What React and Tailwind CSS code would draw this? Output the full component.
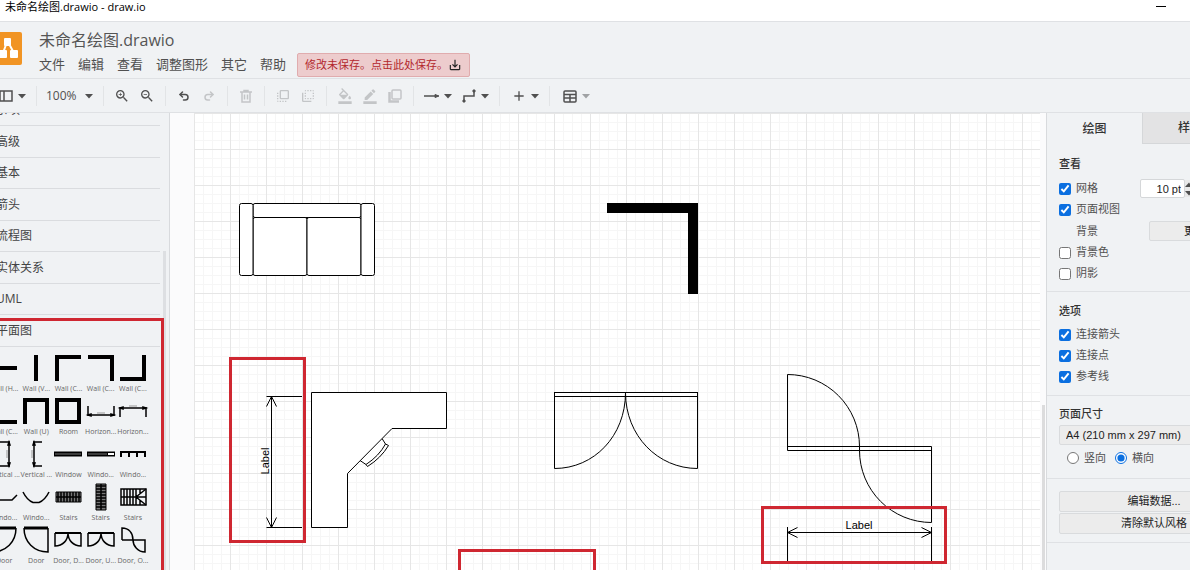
import React, { useState } from 'react'
import {
  MdZoomIn, MdZoomOut, MdFlipToFront, MdFlipToBack, MdFormatColorFill, MdBorderColor, MdSaveAlt, MdAdd,
} from 'react-icons/md'
import { Undo2, Redo2 } from 'lucide-react'

const menus = ['文件', '编辑', '查看', '调整图形', '其它', '帮助']
const categories = ['杂项', '高级', '基本', '箭头', '流程图', '实体关系', 'UML', '平面图']

// each drawing lives in a 28x28 box
const shapes = [
  { name: 'Wall (H...', art: <path d="M1 14H27" strokeWidth="4" /> },
  { name: 'Wall (V...', art: <path d="M14 1V27" strokeWidth="4" /> },
  { name: 'Wall (C...', art: <path d="M3 27V3H27" strokeWidth="4" /> },
  { name: 'Wall (C...', art: <path d="M1 3H25V27" strokeWidth="4" /> },
  { name: 'Wall (C...', art: <path d="M1 25H25V1" strokeWidth="4" /> },
  { name: 'Wall (C...', art: <path d="M3 1V25H27" strokeWidth="4" /> },
  { name: 'Wall (U)', art: <path d="M3 27V3H25V27" strokeWidth="4" /> },
  { name: 'Room', art: <path d="M3 3H25V25H3Z" strokeWidth="4" /> },
  { name: 'Horizon...', art: <><path d="M1 9V19M27 9V19M1 18H27" /><path d="M1 18l3-1v2zM27 18l-3-1v2z" fill="black" /><path d="M10 16H18" stroke="#999" strokeWidth="1" /></> },
  { name: 'Horizon...', art: <><path d="M1 10V20M27 10V20M1 11H27" /><path d="M1 11l3-1v2zM27 11l-3-1v2z" fill="black" /><path d="M10 9H18" stroke="#999" strokeWidth="1" /></> },
  { name: 'Vertical ...', art: <><path d="M10 2H20M10 26H20M19 2V26" /><path d="M19 2l-1 3h2zM19 26l-1-3h2z" fill="black" /><path d="M17 10V18" stroke="#999" strokeWidth="1" /></> },
  { name: 'Vertical ...', art: <><path d="M11 2H20M11 26H20M12 2V26" /><path d="M12 2l-1 3h2zM12 26l-1-3h2z" fill="black" /><path d="M10 10V18" stroke="#999" strokeWidth="1" /></> },
  { name: 'Window', art: <><path d="M0 14H28" strokeWidth="5" /><path d="M1 14H27" stroke="#777" strokeWidth="1" /></> },
  { name: 'Windo...', art: <><path d="M0 14H28" strokeWidth="5" /><path d="M1 14H20" stroke="#777" strokeWidth="1" /><path d="M21 14H27" stroke="white" strokeWidth="2" /></> },
  { name: 'Windo...', art: <><path d="M1 12H27" strokeWidth="2" /><path d="M2 12V17M10 12V17M18 12V17M26 12V17" strokeWidth="2" /></> },
  { name: 'Windo...', art: <path d="M-8 14L-2 17H22L27 12" /> },
  { name: 'Windo...', art: <path d="M1 9C4 15 7 18 11 19.500H17C21 18 24 15 27 9" /> },
  { name: 'Stairs', art: <><path d="M2 9H27V19H2Z" strokeWidth="1" fill="#777" /><path d="M4 9V19M7 9V19M10 9V19M13 9V19M16 9V19M19 9V19M22 9V19M25 9V19M2 14H27" strokeWidth="1.500" /></> },
  { name: 'Stairs', art: <><path d="M9 1H19V27H9Z" strokeWidth="1" fill="#777" /><path d="M9 3H19M9 6H19M9 9H19M9 12H19M9 15H19M9 18H19M9 21H19M9 24H19M14 1V27" strokeWidth="1.500" /></> },
  { name: 'Stairs', art: <><path d="M2 6H27V22H2Z" /><path d="M5 6V22M8 6V22M11 6V22M14 6V22M17 6V22M2 14H27M17 14L27 6M17 14L27 22M21 6V11M21 17V22" /></> },
  { name: 'Door', art: <><path d="M2 2H26" strokeWidth="3" /><path d="M26 2C26 16 16 26 2 26V2" /></> },
  { name: 'Door', art: <><path d="M2 2H26" strokeWidth="3" /><path d="M2 2C2 16 12 26 26 26V2" /></> },
  { name: 'Door, D...', art: <><path d="M1 7H27" strokeWidth="2" /><path d="M1 7V20C9 20 14 14 14 7C14 14 19 20 27 20V7" /></> },
  { name: 'Door, U...', art: <><path d="M1 7H27" strokeWidth="2" /><path d="M1 7V20C9 20 14 14 14 7C14 14 19 20 27 20V7" /></> },
  { name: 'Door, O...', art: <path d="M3 14V2C10 2 14 7 14 14C14 20 19 26 26 26V14H3" /> },
]

function Caret({ className = '' }) {
  return <svg className={`h-2 w-2 shrink-0 ${className}`} viewBox="0 0 8 8" aria-hidden="true"><path d="M0 2H8L4 6.500Z" fill="currentColor" /></svg>
}

function Tool({ label, muted, children }) {
  return (
    <button aria-label={label} className={`flex h-6 w-[25px] shrink-0 items-center justify-center ${muted ? 'text-[#c3c5c7]' : 'text-[#505050]'}`}>
      {children}
    </button>
  )
}

function DropTool({ label, muted, children }) {
  return (
    <button aria-label={label} className="flex h-6 w-[37px] shrink-0 items-center text-[#505050]">
      <span className="flex w-[25px] shrink-0 justify-center">{children}</span>
      <Caret className={muted ? 'text-[#a0a2a4]' : ''} />
    </button>
  )
}

function Separator() {
  return <span className="flex w-3 shrink-0 justify-center"><span className="h-5 w-px bg-[#e2e4e6]" /></span>
}

function Header() {
  return (
    <header className="flex h-[58px] shrink-0 border-t border-b border-[#dfe1e4] bg-[#f0f2f4] whitespace-nowrap">
      <svg className="mt-[10px] -ml-[11px] h-[33px] w-[33px] shrink-0" viewBox="0 0 33 33" aria-label="draw.io">
        <rect width="33" height="33" rx="2" fill="#f19424" />
        <path d="M18 10L14 21M19 10L25 21" stroke="white" strokeWidth="2" />
        <rect x="15" y="6" width="7" height="8" rx="1" fill="white" />
        <rect x="10" y="18" width="8" height="8" rx="1" fill="white" />
        <rect x="21" y="18" width="8" height="8" rx="1" fill="white" />
      </svg>
      <div className="ml-[17px] flex flex-col pt-[5px]">
        <a href="#file" className="h-[26px] text-base leading-[26px] text-[#555]">未命名绘图.drawio</a>
        <nav className="flex h-6 items-center gap-[13px] text-[13px] text-[#505050]">
          {menus.map((m) => <button key={m}>{m}</button>)}
          <button className="-ml-[2px] flex h-6 items-center rounded-xs border border-[#e0acae] bg-[#edcccd] px-[7px] text-[11px] text-[#b3282d]">
            修改未保存。点击此处保存。
            <MdSaveAlt className="h-3.5 w-3.5 text-[#222]" />
          </button>
        </nav>
      </div>
    </header>
  )
}

function Toolbar() {
  return (
    <div className="flex h-[34px] shrink-0 items-center border-b border-[#dfe1e4] bg-[#f0f2f4]">
      <div className="-ml-[7px] flex items-center">
        <DropTool label="视图">
          <svg className="h-3.5 w-3.5" viewBox="0 0 14 14" fill="none" stroke="currentColor" strokeWidth="1.500"><path d="M1 2H13V12H1ZM5 2V12" /></svg>
        </DropTool>
        <Separator />
        <button className="flex h-6 w-[55px] items-center justify-between px-1 text-xs text-[#505050]">100%<Caret /></button>
        <Separator />
        <Tool label="放大"><MdZoomIn className="h-4 w-4" /></Tool>
        <Tool label="缩小"><MdZoomOut className="h-4 w-4" /></Tool>
        <Separator />
        <Tool label="撤销"><Undo2 className="h-3 w-3" strokeWidth={3} /></Tool>
        <Tool label="重做" muted><Redo2 className="h-3 w-3" strokeWidth={3} /></Tool>
        <Separator />
        <Tool label="删除" muted>
          <svg className="h-3.5 w-3.5" viewBox="0 0 14 14" fill="none" stroke="currentColor" strokeWidth="1.500"><path d="M1 3H13M5 3V1.500H9V3M3 3V13H11V3M5.500 5.500V10.500M8.500 5.500V10.500" /></svg>
        </Tool>
        <Separator />
        <Tool label="移至最前" muted><MdFlipToFront className="h-4 w-4" /></Tool>
        <Tool label="移至最后" muted><MdFlipToBack className="h-4 w-4" /></Tool>
        <Separator />
        <Tool label="填充颜色" muted><MdFormatColorFill className="h-4 w-4" /></Tool>
        <Tool label="线条颜色" muted><MdBorderColor className="h-4 w-4" /></Tool>
        <Tool label="阴影" muted>
          <svg className="h-3.5 w-3.5" viewBox="0 0 14 14" fill="none" stroke="currentColor"><rect x="4" y="1" width="9" height="9" rx="1" strokeWidth="1.500" /><path d="M1.500 3V12.500H11" strokeWidth="2.500" /></svg>
        </Tool>
        <Separator />
        <DropTool label="连接">
          <svg className="h-4 w-4" viewBox="0 0 16 16" fill="none" stroke="currentColor" strokeWidth="1.500"><path d="M0 8H12" /><path d="M11 6.500L15 8L11 9.500Z" fill="currentColor" strokeWidth="1" /></svg>
        </DropTool>
        <DropTool label="航点">
          <svg className="h-4 w-4" viewBox="0 0 16 16" fill="none" stroke="currentColor" strokeWidth="1.500"><path d="M3 12V8H13V4" /><path d="M2 12H4V14H2ZM12 2H14V4H12Z" fill="currentColor" strokeWidth="1" /></svg>
        </DropTool>
        <Separator />
        <span className="ml-px flex">
          <DropTool label="插入"><MdAdd className="h-4 w-4" /></DropTool>
        </span>
        <Separator />
        <span className="ml-[2px] flex">
          <DropTool label="表格" muted>
            <svg className="h-3.5 w-3.5" viewBox="0 0 14 14" fill="none" stroke="currentColor" strokeWidth="1.500"><rect x="1" y="2" width="12" height="11" rx="1" /><path d="M1 5.500H13M1 9H13M7 5.500V13" /></svg>
          </DropTool>
        </span>
      </div>
    </div>
  )
}

function Sidebar() {
  return (
    <aside className="relative w-[170px] shrink-0 overflow-hidden border-r border-[#d8dadd] bg-[#f0f2f4] font-['Open_Sans','Noto_Sans_CJK_SC',sans-serif]">
      <div className="-mt-[18px] mr-[9px] -ml-1">
        {categories.map((c) => (
          <button key={c} className="flex w-full items-center border-b border-[#dadcdf] text-xs text-[#444] odd:h-[31px] even:h-8">{c}</button>
        ))}
      </div>
      <div className="mt-[5px] mr-5 -ml-3 grid grid-cols-5">
        {shapes.map((s, i) => (
          <button key={i} className="flex h-[43px] flex-col items-center gap-[3px] pt-[2px]">
            <svg className="h-7 w-7 shrink-0 overflow-visible" viewBox="0 0 28 28" fill="none" stroke="black" strokeWidth="1.500">{s.art}</svg>
            <span className="text-[7px] leading-2 whitespace-nowrap text-[#666]">{s.name}</span>
          </button>
        ))}
      </div>
      <div className="absolute top-[138px] right-[3px] -bottom-1 w-[3px] bg-[#dddfe2]" />
      <div className="absolute top-[205px] right-[5px] -bottom-2 -left-2 border-3 border-[#cf2731]" />
    </aside>
  )
}

function Canvas() {
  return (
    <main className="relative flex min-w-0 flex-1 bg-[#fbfbfc] pr-[6px] pl-6">
      <svg className="h-full w-full" fill="none" stroke="black" strokeWidth="1">
        <defs>
          <pattern id="grid" width="36" height="36" patternUnits="userSpaceOnUse">
            <path d="M9.500 0V36M18.500 0V36M27.500 0V36M0 9.500H36M0 18.500H36M0 27.500H36" stroke="#f6f6f6" />
            <path d="M0.500 0V36M0 0.500H36" stroke="#e6e6e6" />
          </pattern>
        </defs>
        <rect width="100%" height="100%" fill="white" stroke="none" />
        <rect width="100%" height="100%" fill="url(#grid)" stroke="none" />

        {/* sofa */}
        <g fill="white">
          <rect x="59" y="90.500" width="108" height="14" rx="2" />
          <rect x="59" y="104.500" width="54" height="58" rx="2" />
          <rect x="113" y="104.500" width="54" height="58" rx="2" />
          <rect x="45.500" y="90.500" width="13.500" height="72" rx="2" />
          <rect x="167" y="90.500" width="13.500" height="72" rx="2" />
        </g>

        {/* wall corner */}
        <path d="M413 90H504V181H494V100H413Z" fill="black" stroke="none" />

        {/* corner desk and chair */}
        <path d="M172 351.500L173.500 353.500Q187 345 194.500 332.500L191.500 331" fill="white" />
        <path d="M166 347.500L172 351.500Q185 343 191.500 331L188 325.500" fill="white" />
        <path d="M117.500 279.500H252.500V315.500H198L153.500 360.500V414.500H117.500Z" fill="white" />

        {/* vertical dimension */}
        <path d="M77.500 283.500V414.500M72.500 283.500H108M72.500 414.500H108M72.500 293.500L77.500 283.500L82.500 293.500M72.500 404.500L77.500 414.500L82.500 404.500" />
        <text transform="translate(75 348) rotate(-90)" textAnchor="middle" className="text-[11px]" fill="black" stroke="none">Label</text>

        {/* double door */}
        <rect x="360.500" y="279.500" width="143" height="4" fill="white" />
        <path d="M360.500 283.500V355.500C400 355.500 431.500 323 431.500 279.500C431.500 323 464 355.500 503.500 355.500V283.500" />

        {/* opposing doors */}
        <path d="M593.500 337.500V261.500A72 72 0 0 1 665.500 333.500V337.500A72 72 0 0 0 737.500 409.500V333.500H593.500M593.500 337.500H737.500" />

        {/* horizontal dimension */}
        <path d="M593.500 419.500H737.500M593.500 414V448M737.500 414V448M603.500 414.500L593.500 419.500L603.500 424.500M727.500 414.500L737.500 419.500L727.500 424.500" />
        <text x="665" y="416" textAnchor="middle" className="text-[11px]" fill="black" stroke="none">Label</text>

        {/* highlights */}
        <g stroke="#cf2731" strokeWidth="3">
          <rect x="36.500" y="245.500" width="74" height="183" />
          <rect x="568.500" y="394.500" width="183" height="55" />
          <rect x="265.500" y="437.500" width="135" height="200" />
        </g>
      </svg>
      <div className="absolute top-[292px] right-px bottom-0 w-[3px] bg-[#dcdcdd]" />
    </main>
  )
}

function Check({ label, on }) {
  const [checked, setChecked] = useState(on)
  return (
    <label className="flex h-[21px] items-center gap-[5px]">
      <input type="checkbox" checked={checked} onChange={(e) => setChecked(e.target.checked)} className="h-3 w-3 accent-[#0b6fe0]" />
      {label}
    </label>
  )
}

function FormatPanel() {
  const [grid, setGrid] = useState('10 pt')
  const [landscape, setLandscape] = useState(true)
  return (
    <aside className="w-36 shrink-0 overflow-hidden border-l border-[#d8dadd] bg-[#f0f2f4] text-[11px] whitespace-nowrap text-[#505050]">
      <div className="w-[202px]">
        <div className="flex h-[31px] pr-3 text-xs font-medium text-[#333]">
          <button className="w-[95px] shrink-0">绘图</button>
          <button className="w-[95px] shrink-0 border-b border-l border-[#d5d7d9] bg-[#e3e3e4]">样式</button>
        </div>

        <section className="border-b border-[#dfe1e4] px-3 pt-[9px] pb-[7px]">
          <h2 className="h-[25px] leading-[22px] font-medium text-[#333]">查看</h2>
          <div className="flex items-center">
            <Check label="网格" on />
            <input aria-label="网格大小" value={grid} onChange={(e) => setGrid(e.target.value)} className="ml-[42px] h-[19px] w-[45px] rounded-xs border border-[#d5d7d9] bg-white pr-[3px] text-right text-[#222]" />
            <span className="flex h-[17px] w-3 flex-col justify-between bg-[#e9e9e9] py-px">
              <Caret className="rotate-180" />
              <Caret />
            </span>
          </div>
          <Check label="页面视图" on />
          <div className="flex h-[22px] items-center">
            <span className="ml-[17px]">背景</span>
            <button className="ml-[51px] h-5 w-[101px] shrink-0 rounded-xs border border-[#d9dbdd] bg-[#ececec] text-[#222]">更改...</button>
          </div>
          <Check label="背景色" on={false} />
          <Check label="阴影" on={false} />
        </section>

        <section className="border-b border-[#dfe1e4] px-3 pt-[7px] pb-2">
          <h2 className="h-[25px] leading-6 font-medium text-[#333]">选项</h2>
          <Check label="连接箭头" on />
          <Check label="连接点" on />
          <Check label="参考线" on />
        </section>

        <section className="border-b border-[#dfe1e4] px-3 pt-[7px] pb-[7px]">
          <h2 className="h-[22px] leading-[22px] font-medium text-[#333]">页面尺寸</h2>
          <select aria-label="页面尺寸" className="block h-5 w-[190px] appearance-none rounded-xs border border-[#d9dbdd] bg-[#ececec] pl-[6px] text-[#222]">
            <option>A4 (210 mm x 297 mm)</option>
          </select>
          <div className="flex h-[26px] items-center gap-[9px] pl-2">
            <label className="flex items-center gap-[5px]"><input type="radio" name="orientation" checked={!landscape} onChange={() => setLandscape(false)} className="h-3 w-3 accent-[#0b6fe0]" />竖向</label>
            <label className="flex items-center gap-[5px]"><input type="radio" name="orientation" checked={landscape} onChange={() => setLandscape(true)} className="h-3 w-3 accent-[#0b6fe0]" />横向</label>
          </div>
        </section>

        <section className="flex flex-col gap-px border-b border-[#dfe1e4] pt-3 pb-2 pl-3 text-[#222]">
          <button className="h-[21px] w-[190px] rounded-xs border border-[#d9dbdd] bg-[#ececec]">编辑数据...</button>
          <button className="h-[21px] w-[190px] rounded-xs border border-[#d9dbdd] bg-[#ececec]">清除默认风格</button>
        </section>
      </div>
    </aside>
  )
}

export default function App() {
  return (
    <div className="flex h-screen flex-col overflow-hidden bg-white font-['Open_Sans','Noto_Sans_CJK_SC',sans-serif]">
      <div className="flex h-[21px] shrink-0 items-center justify-between pr-6 pb-2 pl-[5px] text-[11px] leading-3 text-black">
        <span>未命名绘图.drawio - draw.io</span>
        <button aria-label="最小化" className="h-px w-[10px] bg-black" />
      </div>
      <Header />
      <Toolbar />
      <div className="flex min-h-0 flex-1 font-['Liberation_Sans','Noto_Sans_CJK_SC',sans-serif]">
        <Sidebar />
        <Canvas />
        <FormatPanel />
      </div>
    </div>
  )
}
